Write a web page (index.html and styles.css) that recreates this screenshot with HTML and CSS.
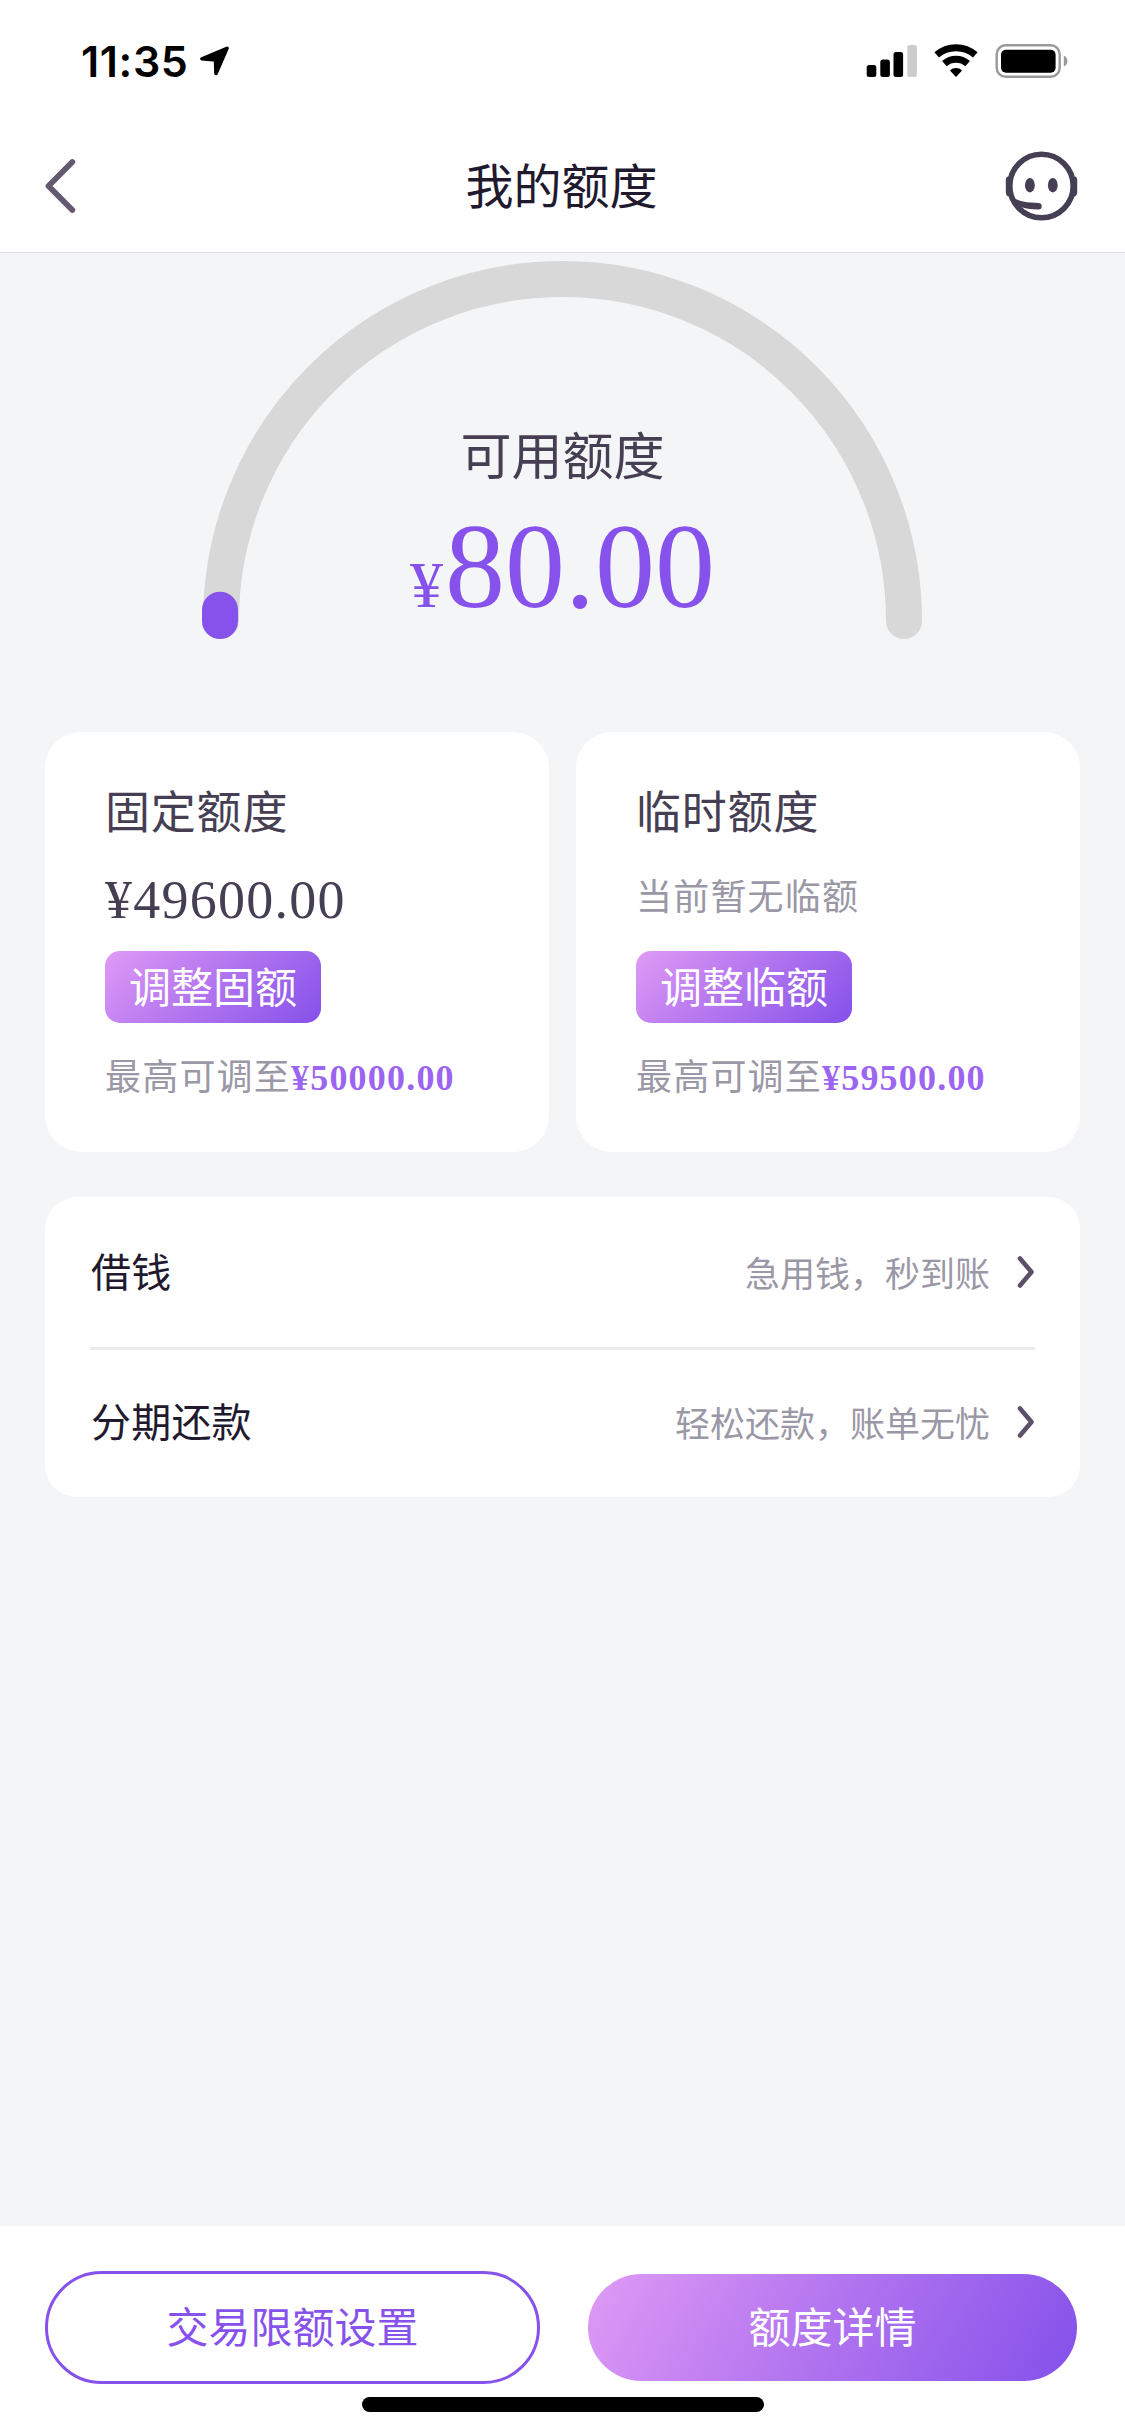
FILE: index.html
```html
<!DOCTYPE html>
<html lang="zh-CN">
<head>
<meta charset="utf-8">
<title>我的额度</title>
<link rel="stylesheet" href="styles.css">
</head>
<body>
<div class="screen">
  <div class="status-bar">
    <div class="status-left">
      <span class="time">11:35</span>
      <svg class="location" width="30" height="30" viewBox="0 0 30 30"><path d="M27 2.300 2 12.800 15.500 14 16 27.500Z" fill="#000" stroke="#000" stroke-width="3.600" stroke-linejoin="round"/></svg>
    </div>
    <svg class="status-icons" width="204" height="36" viewBox="0 0 204 36">
      <rect x="0.700" y="22" width="9.600" height="12" rx="2.500"/>
      <rect x="14.300" y="16.500" width="9.600" height="17.500" rx="2.500"/>
      <rect x="27.500" y="9" width="9.600" height="25" rx="2.500"/>
      <rect x="41.300" y="2" width="9.600" height="32" rx="2.500" fill="#ccc"/>
      <g fill="none" stroke="#000" stroke-width="7">
        <path d="M70.700 11.900a29.300 29.300 0 0 1 38.600 0"/>
        <path d="M78.400 20.600a17.700 17.700 0 0 1 23.200 0"/>
      </g>
      <path d="M90 34 83.900 27.400a9 9 0 0 1 12.200 0Z"/>
      <rect x="130.700" y="2.200" width="63" height="31.600" rx="9" fill="none" stroke="#999" stroke-width="2.400"/>
      <rect x="135" y="6.700" width="54.600" height="23" rx="5"/>
      <path d="M197.800 12.500q3.600 2 3.600 5.500t-3.600 5.500Z" fill="#999"/>
    </svg>
  </div>
  <header class="nav-bar">
    <svg class="back" width="32" height="56" viewBox="0 0 32 56"><path d="M27.300 4 3.500 28l23.800 24" fill="none" stroke="#645a70" stroke-width="5.800" stroke-linecap="round" stroke-linejoin="round"/></svg>
    <h1 class="title">我的额度</h1>
    <svg class="service" width="73" height="70" viewBox="0 0 73 70">
      <circle cx="36.500" cy="35" r="31.700" fill="none" stroke="#463f53" stroke-width="5.600"/>
      <path d="M6 25.500H3Q.8 26 .8 28.500v13q0 2.500 2.200 4H6ZM67 25.500h3q2.200.5 2.200 3v13q0 2.500-2.200 4H67Z" fill="#463f53"/>
      <ellipse cx="24.900" cy="34.200" rx="4.900" ry="7.300" fill="#463f53"/>
      <ellipse cx="47.800" cy="34.200" rx="4.900" ry="7.300" fill="#463f53"/>
      <path d="M6 45.500Q14 50.500 22 51.200L33.500 52a3.200 3.200 0 0 1 0 6.400Q22 58.400 14 55.200L9 53Z" fill="#463f53"/>
    </svg>
  </header>
  <main class="content">
    <section class="gauge">
      <svg class="gauge-arc" width="722" height="380" viewBox="0 0 722 380">
        <path d="M20 361a341.500 342 0 0 1 683 0" fill="none" stroke="#d8d8d8" stroke-width="36" stroke-linecap="round"/>
        <path d="M19 361v-11.300" fill="none" stroke="#8752eb" stroke-width="36" stroke-linecap="round"/>
      </svg>
      <div class="gauge-text">
        <div class="gauge-label">可用额度</div>
        <div class="gauge-value"><span class="yen">¥</span>80.00</div>
      </div>
    </section>
    <section class="cards">
      <article class="card">
        <h2 class="card-title">固定额度</h2>
        <p class="card-amount">¥49600.00</p>
        <a class="chip">调整固额</a>
        <p class="card-max">最高可调至<b class="max">¥50000.00</b></p>
      </article>
      <article class="card">
        <h2 class="card-title">临时额度</h2>
        <p class="card-empty">当前暂无临额</p>
        <a class="chip">调整临额</a>
        <p class="card-max">最高可调至<b class="max">¥59500.00</b></p>
      </article>
    </section>
    <section class="list">
      <div class="row">
        <span class="row-name">借钱</span>
        <span class="row-hint">急用钱，秒到账</span>
        <svg width="18" height="34" viewBox="0 0 18 34"><path d="M4 3.500 15.500 17 4 30.500" fill="none" stroke="#5d5069" stroke-width="4.600" stroke-linecap="round" stroke-linejoin="round"/></svg>
      </div>
      <div class="row">
        <span class="row-name">分期还款</span>
        <span class="row-hint">轻松还款，账单无忧</span>
        <svg width="18" height="34" viewBox="0 0 18 34"><path d="M4 3.500 15.500 17 4 30.500" fill="none" stroke="#5d5069" stroke-width="4.600" stroke-linecap="round" stroke-linejoin="round"/></svg>
      </div>
    </section>
  </main>
  <footer class="actions">
    <div class="buttons">
      <a class="btn btn-outline">交易限额设置</a>
      <a class="btn btn-fill">额度详情</a>
    </div>
    <div class="home-indicator"></div>
  </footer>
</div>
</body>
</html>
```
FILE: styles.css
```css
* { box-sizing: border-box; }
body, h1, h2, p { margin: 0; font-weight: 400; }
svg { display: block; flex: none; }

.screen {
  width: 1125px;
  height: 2436px;
  display: flex;
  flex-direction: column;
  background: #f4f5f7;
  font-family: "Noto Sans CJK SC", sans-serif;
  color: #463e52;
}

.status-bar {
  height: 116px;
  padding: 0 55px 0 81px;
  display: flex;
  justify-content: space-between;
  background: #fff;
}
.status-left { display: flex; gap: 12px; }
.time {
  width: 107px;
  margin-top: 33px;
  font: 600 43px/56px Inter, sans-serif;
  letter-spacing: .6px;
  color: #000;
  white-space: nowrap;
}
.location { margin-top: 46px; }
.status-icons { margin-top: 43px; }

.nav-bar {
  height: 137px;
  padding: 4px 47px 0 45px;
  display: flex;
  align-items: center;
  justify-content: space-between;
  background: #fff;
  border-bottom: 1px solid #dcdcde;
}
.back { margin-right: 41px; }
.title {
  margin: -6px 0 0;
  font-size: 48px;
  line-height: 64px;
  color: #211a2e;
}

.content { flex: 1; }
.gauge {
  height: 479px;
  display: grid;
  justify-content: center;
  align-items: start;
}
.gauge-arc, .gauge-text { grid-area: 1 / 1; }
.gauge-arc { margin: 7px 0 0 -1px; }
.gauge-text { padding-top: 167px; text-align: center; }
.gauge-label { font-size: 51px; line-height: 66px; }
.gauge-value {
  margin-top: 13px;
  font: 120px/136px "Liberation Serif", serif;
  color: #8752eb;
}
.yen { margin-right: 2px; font-size: 66px; }

.cards {
  display: grid;
  grid-template-columns: 504px 504px;
  column-gap: 27px;
  padding-left: 45px;
}
.card {
  height: 420px;
  padding: 48px 60px 0;
  border-radius: 36px;
  background: #fff;
}
.card-title { font-size: 45px; line-height: 60px; letter-spacing: .8px; }
.card-amount {
  height: 72px;
  margin-top: 24px;
  font: 54px/72px "Liberation Serif", serif;
  letter-spacing: 1.25px;
}
.card-empty {
  height: 72px;
  margin-top: 24px;
  font-size: 36px;
  line-height: 60px;
  letter-spacing: 1.2px;
  color: #9a98a6;
}
.chip {
  display: flex;
  align-items: center;
  justify-content: center;
  width: 216px;
  height: 72px;
  margin-top: 15px;
  padding-bottom: 5px;
  border-radius: 15px;
  background: linear-gradient(135deg, #e09bf5, #c886f2 25%, #a76cee 62%, #8450ea);
  color: #fff;
  font-size: 42px;
  line-height: 60px;
}
.card-max {
  margin-top: 24px;
  font-size: 36px;
  line-height: 54px;
  letter-spacing: 1.2px;
  color: #9a98a6;
  white-space: nowrap;
}
.max { font-family: "Liberation Serif", serif; color: #9c65f1; }

.list {
  height: 300px;
  margin: 45px 45px 0;
  padding: 0 45px;
  border-radius: 32px;
  background: #fff;
}
.row {
  height: 150px;
  padding: 0 1px;
  display: flex;
  align-items: center;
}
.row + .row { box-shadow: inset 0 3px #ebebed; }
.row-name {
  flex: 1;
  margin-top: -5px;
  font-size: 40px;
  line-height: 60px;
  letter-spacing: .2px;
  color: #211a2e;
}
.row-hint { margin-right: 26px; font-size: 35px; line-height: 60px; color: #9a98a6; }

.actions {
  height: 210px;
  padding: 45px 48px 0 45px;
  background: #fff;
}
.buttons {
  display: flex;
  align-items: center;
  justify-content: space-between;
}
.btn {
  display: flex;
  align-items: center;
  justify-content: center;
  padding-bottom: 5px;
  font-size: 42px;
  line-height: 60px;
}
.btn-outline {
  width: 495px;
  height: 113px;
  border: 3px solid #8752eb;
  border-radius: 57px;
  color: #8752eb;
}
.btn-fill {
  width: 489px;
  height: 107px;
  border-radius: 54px;
  background: linear-gradient(120deg, #e09bf5, #c886f2 25%, #a76cee 60%, #8450ea);
  color: #fff;
}
.home-indicator {
  width: 402px;
  height: 15px;
  margin: 13px 0 0 317px;
  border-radius: 8px;
  background: #000;
}
```
